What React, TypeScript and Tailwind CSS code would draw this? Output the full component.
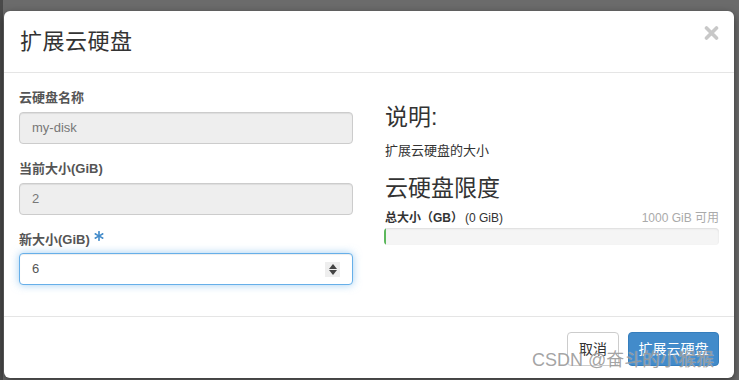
import React from "react";
import { FaAsterisk } from "react-icons/fa";

const font = { fontFamily: '"Liberation Sans", "Noto Sans CJK SC", sans-serif' };

function Label({ children }: { children: React.ReactNode }) {
  return (
    <div className="text-[13px] font-bold leading-[19px] mb-[5px] text-[#555] flex items-center">{children}</div>
  );
}

export default function App() {
  return (
    <div className="w-[739px] h-[380px] overflow-hidden bg-[#6b6b6b] relative" style={font}>
      <div className="absolute left-0 top-0 w-[3px] h-full bg-[#4a4a4a]" />
      <div className="absolute left-[4px] top-[11px] w-[730px] bg-white rounded-[6px] shadow-[0_3px_9px_rgba(0,0,0,0.5)]">
        <div className="h-[62px] border-b border-[#e5e5e5] flex items-center justify-between pl-[16px] pr-[15px]">
          <div className="text-[22px] text-[#333] leading-none font-normal tracking-[0.5px]">扩展云硬盘</div>
          <svg width="15" height="14" viewBox="0 0 15 14" className="mb-[18px]">
            <path d="M2.5 2 L12.5 12 M12.5 2 L2.5 12" stroke="#c8c8c8" strokeWidth="3.6" strokeLinecap="round" />
          </svg>
        </div>
        <div className="flex px-[15px] pt-[15px] pb-[16px] gap-[32px]">
          <div className="w-[334px]">
            <div className="mb-[15px]">
              <Label>云硬盘名称</Label>
              <div className="h-[32px] rounded-[4px] border border-[#ccc] bg-[#eee] px-[12px] flex items-center text-[13px] text-[#777] shadow-[inset_0_1px_1px_rgba(0,0,0,0.075)]">
                my-disk
              </div>
            </div>
            <div className="mb-[15px]">
              <Label>当前大小(GiB)</Label>
              <div className="h-[32px] rounded-[4px] border border-[#ccc] bg-[#eee] px-[12px] flex items-center text-[13px] text-[#777] shadow-[inset_0_1px_1px_rgba(0,0,0,0.075)]">
                2
              </div>
            </div>
            <div className="mb-[15px]">
              <Label>
                新大小(GiB)
                <FaAsterisk className="ml-[4px] text-[#428bca] w-[10px] h-[10px] -mt-[7px]" />
              </Label>
              <div className="h-[32px] -mt-[1px] mb-[1px] rounded-[4px] border border-[#66afe9] bg-white pl-[12px] pr-[12px] flex items-center justify-between text-[13px] text-[#555] shadow-[inset_0_1px_1px_rgba(0,0,0,0.075),0_0_8px_rgba(102,175,233,0.6)]">
                <span>6</span>
                <div className="w-[15px] h-[15px] bg-[#eee] flex flex-col items-center justify-center gap-[1px]">
                  <svg width="8" height="5" viewBox="0 0 8 5"><path d="M0 5 L4 0 L8 5 Z" fill="#444" /></svg>
                  <svg width="8" height="5" viewBox="0 0 8 5"><path d="M0 0 L4 5 L8 0 Z" fill="#444" /></svg>
                </div>
              </div>
            </div>
          </div>
          <div className="w-[334px] pt-[15px]">
            <div className="text-[23px] leading-[28px] text-[#333]">说明:</div>
            <div className="text-[13px] leading-[19px] text-[#333] mt-[10px]">扩展云硬盘的大小</div>
            <div className="text-[23px] leading-[28px] text-[#333] mt-[14px]">云硬盘限度</div>
            <div className="flex justify-between items-end text-[12px] leading-[16px] mt-[8px]">
              <div className="text-[#333]">
                <span className="font-bold">总大小（GB）</span>
                <span className="ml-[2px]">(0 GiB)</span>
              </div>
              <div className="text-[#aaa]">1000 GiB 可用</div>
            </div>
            <div className="mt-[2px] h-[17px] rounded-[4px] bg-[#f5f5f5] shadow-[inset_0_1px_2px_rgba(0,0,0,0.1)] overflow-hidden -ml-[1px]">
              <div className="w-[2px] h-full bg-[#5cb85c]" />
            </div>
          </div>
        </div>
        <div className="border-t border-[#e5e5e5] flex justify-end gap-[9px] px-[15px] pt-[15px] pb-[12px]">
          <div className="h-[34px] w-[52px] rounded-[4px] border border-[#ccc] bg-white flex items-center justify-center text-[14px] text-[#333]">取消</div>
          <div className="h-[34px] w-[91px] rounded-[4px] border border-[#357ebd] bg-[#428bca] flex items-center justify-center text-[14px] text-white">扩展云硬盘</div>
        </div>
      </div>
      <div className="absolute left-[532px] top-[349px] text-[18px] leading-[22px] text-[#8c8c8c]/80 whitespace-nowrap" style={{ textShadow: "0 0 1px rgba(255,255,255,0.6)" }}>
        CSDN @奋斗的小猴猴
      </div>
    </div>
  );
}
